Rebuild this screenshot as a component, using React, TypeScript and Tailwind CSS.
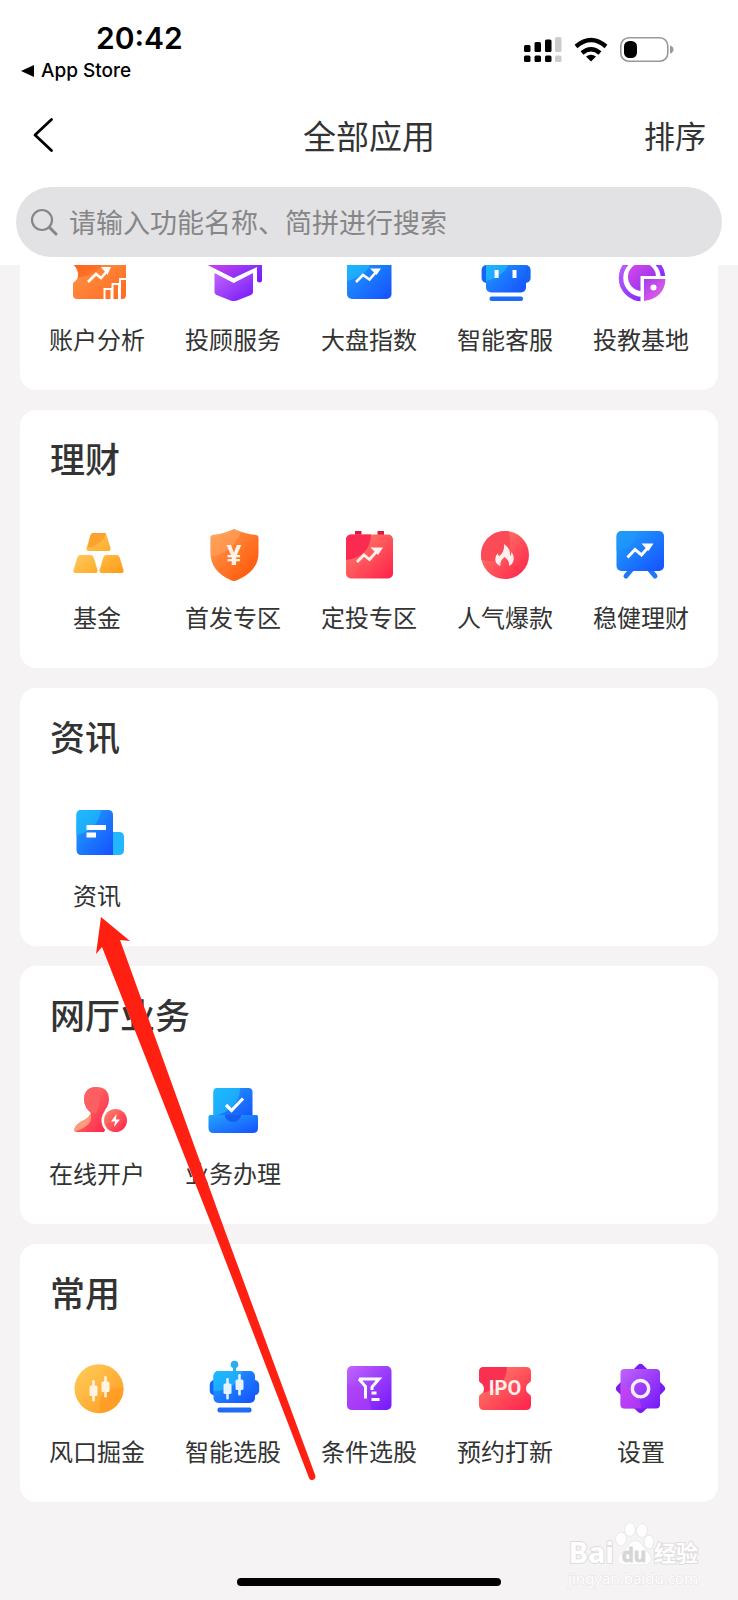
import React from 'react';

interface AppItem {
  label: string;
  icon: React.ReactNode;
}

interface AppSection {
  title: string;
  items: AppItem[];
}

const GRADIENTS: Record<string, [string, string]> = {
  orange: ['#ff9a4f', '#ff6a1f'],
  orangeDeep: ['#ff5a12', '#ff7d35'],
  shield: ['#ffa052', '#ff4f02'],
  gold: ['#ffcd5c', '#ff9a1f'],
  goldSoft: ['#ffc95c', '#fdac2c'],
  goldDeep: ['#ffbe45', '#ff9a1a'],
  purple: ['#c264fb', '#7417fb'],
  purpleDeep: ['#d84be6', '#8b2cf5'],
  pink: ['#a53cf0', '#ee68e4'],
  blue: ['#22a6fc', '#1550ff'],
  cyan: ['#1cbcff', '#1e9dfb'],
  red: ['#ff8a6a', '#ff1f4b'],
  redDeep: ['#ff5a5a', '#f9254a'],
};

// Gradients are declared once and shared by every icon
const Gradients = () => (
  <svg width="0" height="0" className="absolute" aria-hidden="true">
    <defs>
      {Object.entries(GRADIENTS).map(([id, [from, to]]) => (
        <linearGradient key={id} id={id} x1="0" y1="0" x2="1" y2="1">
          <stop offset="0" stopColor={from} />
          <stop offset="1" stopColor={to} />
        </linearGradient>
      ))}
    </defs>
  </svg>
);

const Icon = ({ children }: { children: React.ReactNode }) => (
  <svg viewBox="0 0 64 64" className="size-16" aria-hidden="true">
    {children}
  </svg>
);

const AccountIcon = () => (
  <Icon>
    <path d="M12 10h45a4 4 0 0 1 4 4v36a4 4 0 0 1-4 4H12a4 4 0 0 1-4-4V38q6-4 5-10-1-5-5-9v-5a4 4 0 0 1 4-4z" fill="url(#orange)" />
    <path d="M8 19v-5a4 4 0 0 1 4-4h28q0 18-27 23 2-8-5-14z" fill="url(#orangeDeep)" />
    <path d="M23 37l8-8 5 4 7-8" fill="none" stroke="#fff" strokeWidth="2.6" />
    <path d="M36 22h10l-3.500 8z" fill="#fff" />
    <path d="M39.500 55V44h7v11M47.500 55V39h6.500v16M55 55V34h6" fill="none" stroke="#fff" strokeWidth="2" />
  </Icon>
);

const AdvisorIcon = () => (
  <Icon>
    <path d="M32.700 5L61 19v16.500q0 2-2.500 2t-2.500-2V22L32.700 33 5 19z" fill="url(#purple)" />
    <path d="M5 19L32.700 33 44 18 40 9z" fill="url(#purpleDeep)" />
    <path d="M13.500 28l19.200 10L52 28v19q0 2-2 3l-14 5.500q-3.500 1-6.500 0L15.500 50q-2-1-2-3z" fill="url(#purple)" />
  </Icon>
);

const IndexIcon = () => (
  <Icon>
    <rect x="10" y="10" width="44.500" height="44" rx="5" fill="url(#blue)" />
    <path d="M10 36V15a5 5 0 0 1 5-5h21q-2 20-26 26z" fill="url(#cyan)" />
    <path d="M19 37l7-7 6.500 4.500 7-8" fill="none" stroke="#fff" strokeWidth="2.600" />
    <path d="M33 23.500h11l-4.500 6.500z" fill="#fff" />
  </Icon>
);

const ServiceIcon = () => (
  <Icon>
    <rect x="8.600" y="20" width="49" height="18" rx="5" fill="#1464f5" />
    <rect x="13" y="10" width="40" height="37.500" rx="5" fill="url(#blue)" />
    <path d="M13 36V15a5 5 0 0 1 5-5h20q-2 20-25 26z" fill="url(#cyan)" />
    <path d="M21.600 25h4v8h-4zM39.500 25h4v8h-4z" fill="#fff" />
    <rect x="16.500" y="51.500" width="33.500" height="4.500" rx="2" fill="#1e6cf5" />
  </Icon>
);

const EducationIcon = () => (
  <Icon>
    <circle cx="33" cy="33" r="21" fill="none" stroke="url(#purple)" strokeWidth="4.500" />
    <circle cx="33" cy="32" r="14" fill="url(#purpleDeep)" />
    <path d="M31.500 31H60v29H31.500z" fill="#fff" />
    <path d="M35 34h21.500q-1 19-21.500 22z" fill="url(#pink)" />
    <circle cx="44.500" cy="42.500" r="3" fill="#fff" />
  </Icon>
);

const GoldBar = ({ x, y, fill }: { x: number; y: number; fill: string }) => (
  <path
    d="M7 0h10q2 0 3 2l4 13q.500 3-2 3H2q-2.500 0-2-3L4 2q1-2 3-2z"
    transform={`translate(${x} ${y})`}
    fill={fill}
  />
);

const FundIcon = () => (
  <Icon>
    <GoldBar x={21.5} y={10} fill="url(#goldSoft)" />
    <path d="M28.500 10H41q-2 11-18.500 15l3-13q1-2 3-2z" fill="#fda22d" />
    <GoldBar x={8.5} y={32} fill="url(#goldSoft)" />
    <GoldBar x={34.5} y={32} fill="url(#goldDeep)" />
  </Icon>
);

const ShieldIcon = () => (
  <Icon>
    <path d="M33 6q11 5 22 6 2.500.500 2.500 2v16q0 18-21 27-3.500 2-7 0Q9.500 48 9.500 30V14q0-1.500 2.500-2 11-1 21-6z" fill="url(#shield)" />
    <path d="M33 6l7 3Q32 30 9.500 34V14q0-1.500 2.500-2 11-1 21-6z" fill="#ffb070" opacity=".4" />
    <text x="33" y="42" textAnchor="middle" fontSize="28" fontWeight="700" fill="#fff3ea" fontFamily="Roboto">¥</text>
  </Icon>
);

const PlanIcon = () => (
  <Icon>
    <path d="M18 8h6.500v8H18zM40.500 8H47v8h-6.500z" fill="#dc1745" />
    <rect x="9" y="11.500" width="47" height="44" rx="5" fill="url(#red)" />
    <path d="M9 37V16.500a5 5 0 0 1 5-5h20Q33 34 9 37z" fill="#fb2a50" />
    <path d="M20 39l7-7 5.500 4.500L40 28" fill="none" stroke="#fff0f0" strokeWidth="2.800" />
    <path d="M33.500 24.500H46l-5 7.500z" fill="#fff0f0" />
  </Icon>
);

const HotIcon = () => (
  <Icon>
    <circle cx="32" cy="32" r="24" fill="url(#red)" />
    <path d="M36 8.300q5 24-11 29-8 2-16.500-.5A24 24 0 0 1 36 8.300z" fill="#fb4b57" />
    <path d="M31 21q7 5 6 12 1.500-1 1.500-4 3 4 2 8.500-1 4-4.500 5.500 1-5-4.500-9-5 4-4 9-4-1.500-5-5-1-4 2-7.500 1.500 2 1.500 3 6-5 5-12.500z" fill="#fff0f0" />
  </Icon>
);

const SteadyIcon = () => (
  <Icon>
    <path d="M22 47l-5 6M41 47l5 6" stroke="#1e78f8" strokeWidth="5" strokeLinecap="round" />
    <rect x="7.500" y="8" width="47.500" height="40" rx="5" fill="url(#blue)" />
    <path d="M7.500 28V13a5 5 0 0 1 5-5H29q-2 15-21.500 20z" fill="#1f97f8" opacity=".7" />
    <path d="M18.500 34.500l7.500-8 6.500 5.500L39.500 24" fill="none" stroke="#fff" strokeWidth="3" />
    <path d="M32.500 20.500h12l-5 7.500z" fill="#fff" />
  </Icon>
);

const NewsIcon = () => (
  <Icon>
    <path d="M47 31h7q5 0 5 5v13q0 5-5 5h-7z" fill="#21b6fd" />
    <path d="M16.500 9H43q5 0 5 5v40H16.500q-5 0-5-5V14q0-5 5-5z" fill="url(#blue)" />
    <path d="M16.500 9H36q-3 20-24.500 25V14q0-5 5-5z" fill="url(#cyan)" />
    <path d="M21.500 24H41v5H21.500zM21.500 31.500H31v5h-9.500z" fill="#fff" />
  </Icon>
);

const OpenAccountIcon = () => (
  <Icon>
    <path d="M31.500 8q12 0 12.500 12 0 6-4 11-2 4 .500 7 4 8-1.500 15H12q-3 0-2.500-3 1-4 6-7 9-4 10.500-9-7-6-7-14 1-12 12.500-12z" fill="url(#red)" />
    <path d="M31.500 8q-12 0-12.500 12 0 8 7 14h5q7-13 1-26z" fill="#fb5f61" />
    <path d="M9.500 50q1-4 6-7 8-3.500 10-8.500 4 12-16 18z" fill="#ff9b7a" />
    <circle cx="50.500" cy="41.500" r="14" fill="#fff" />
    <circle cx="50.500" cy="41.500" r="11.500" fill="url(#red)" />
    <path d="M51.500 35l-5.500 7.500h4L49 48l6-7.500h-4z" fill="#fff" />
  </Icon>
);

const BusinessIcon = () => (
  <Icon>
    <path d="M17 9h30.500q4 0 4 4v27h-39V13q0-4 4.500-4z" fill="url(#blue)" />
    <path d="M17 9h22q0 22-26.500 28V13q0-4 4.500-4z" fill="url(#cyan)" />
    <path d="M9 36H24a8 6 0 0 0 16 0h15.500q1.500 0 1.500 1.500V49q0 5-5 5H12.500q-5 0-5-5V37.500q0-1.500 1.500-1.500z" fill="url(#blue)" />
    <path d="M24 36h16a8 7 0 0 1-16 0z" fill="#155ff0" />
    <path d="M25 26l5.500 5.500L42 19.500" fill="none" stroke="#fff" strokeWidth="3.200" />
  </Icon>
);

const Candle = ({ x, y, fill }: { x: number; y: number; fill: string }) => (
  <g transform={`translate(${x} ${y})`} fill={fill}>
    <rect x="-1.300" width="2.600" height="21.500" rx="1.200" />
    <rect x="-4" y="5.500" width="8" height="10.500" rx="1.500" />
  </g>
);

const TrendIcon = () => (
  <Icon>
    <circle cx="34" cy="31.700" r="24.500" fill="url(#gold)" />
    <path d="M58.500 31A24.500 24.500 0 0 1 35 56q-4-20 14-25 5-1 9.500 0z" fill="#ff9a22" opacity=".7" />
    <Candle x={28.5} y={23} fill="#fff4e2" />
    <Candle x={40.5} y={19} fill="#fff4e2" />
  </Icon>
);

const RobotIcon = () => (
  <Icon>
    <circle cx="33.500" cy="7.500" r="3.800" fill="#29aef0" />
    <path d="M32 10h3v6h-3z" fill="#29aef0" />
    <rect x="8.700" y="23" width="49.500" height="15.500" rx="5" fill="#1464f5" />
    <rect x="12.500" y="14" width="41.500" height="32" rx="5" fill="url(#blue)" />
    <path d="M12.500 34V19a5 5 0 0 1 5-5H41q-5 20-28.500 20z" fill="url(#cyan)" />
    <rect x="16.500" y="50.500" width="34" height="5" rx="2" fill="#1e6cf5" />
    <Candle x={26.5} y={21} fill="#e6f2ff" />
    <Candle x={38.5} y={17} fill="#e6f2ff" />
  </Icon>
);

const FilterIcon = () => (
  <Icon>
    <rect x="10" y="9" width="44.500" height="44" rx="5" fill="url(#purple)" />
    <path d="M10 27q22 4 24 26H15q-5 0-5-5z" fill="#b13df5" opacity=".6" />
    <path d="M22 22h20L35 30v3M22 22l6.500 7.500V41.500" fill="none" stroke="#fff" strokeWidth="3" />
    <path d="M34.500 34.500h5v3h-5zM34.500 41h8v3h-8z" fill="#fff" />
  </Icon>
);

const IpoIcon = () => (
  <Icon>
    <path d="M11 10h42q5 0 5 5v8q0 2-2 3-3 2-3 5.500t3 5.500q2 1 2 3v8q0 5-5 5H11q-5 0-5-5v-8q0-2 2-3 3-2 3-5.500T8 26q-2-1-2-3v-8q0-5 5-5z" fill="url(#red)" />
    <path d="M11 10h23q-1 22-23.500 25.500Q11 34 11 31.500 11 28 8 26q-2-1-2-3v-8q0-5 5-5z" fill="#f9304f" />
    <text x="32" y="38" textAnchor="middle" fontSize="20" fontWeight="700" fill="#fff0f0" fontFamily="Roboto">IPO</text>
  </Icon>
);

const SettingsIcon = () => (
  <Icon>
    <rect x="13" y="13" width="37" height="37" rx="4" fill="#7a1df0" transform="rotate(45 31.500 31.500)" />
    <rect x="11.500" y="12" width="39.500" height="39.500" rx="4" fill="url(#purple)" />
    <path d="M11.500 28q17 1 21 23.500h-17q-4 0-4-4z" fill="#d23ff0" opacity=".5" />
    <circle cx="31.500" cy="31.700" r="8.200" fill="none" stroke="#fff0fa" strokeWidth="3.400" />
  </Icon>
);

const TOP_ITEMS: AppItem[] = [
  { label: '账户分析', icon: <AccountIcon /> },
  { label: '投顾服务', icon: <AdvisorIcon /> },
  { label: '大盘指数', icon: <IndexIcon /> },
  { label: '智能客服', icon: <ServiceIcon /> },
  { label: '投教基地', icon: <EducationIcon /> },
];

const SECTIONS: AppSection[] = [
  {
    title: '理财',
    items: [
      { label: '基金', icon: <FundIcon /> },
      { label: '首发专区', icon: <ShieldIcon /> },
      { label: '定投专区', icon: <PlanIcon /> },
      { label: '人气爆款', icon: <HotIcon /> },
      { label: '稳健理财', icon: <SteadyIcon /> },
    ],
  },
  { title: '资讯', items: [{ label: '资讯', icon: <NewsIcon /> }] },
  {
    title: '网厅业务',
    items: [
      { label: '在线开户', icon: <OpenAccountIcon /> },
      { label: '业务办理', icon: <BusinessIcon /> },
    ],
  },
  {
    title: '常用',
    items: [
      { label: '风口掘金', icon: <TrendIcon /> },
      { label: '智能选股', icon: <RobotIcon /> },
      { label: '条件选股', icon: <FilterIcon /> },
      { label: '预约打新', icon: <IpoIcon /> },
      { label: '设置', icon: <SettingsIcon /> },
    ],
  },
];

const AppGrid = ({ items }: { items: AppItem[] }) => (
  <div className="grid grid-cols-5 px-[9px] pb-[35px]">
    {items.map(({ label, icon }) => (
      <button key={label} type="button" className="flex flex-col items-center gap-[14px]">
        {icon}
        <span className="whitespace-nowrap text-2xl leading-8">{label}</span>
      </button>
    ))}
  </div>
);

const StatusBar = () => (
  <div className="flex justify-between pl-5 pr-16 pt-5 font-[Inter,sans-serif] text-black">
    <div>
      <div className="pl-[76px] text-[30px] font-semibold leading-9">20:42</div>
      <a href="#app-store" className="flex items-center gap-[7px] text-[19px] font-medium leading-[30px]">
        <svg viewBox="0 0 14 12" className="h-3 w-[14px]" aria-hidden="true">
          <path d="M1 6L14 0v12z" />
        </svg>
        App Store
      </a>
    </div>
    <div className="flex items-center gap-3 self-start pt-[17px]">
      <svg viewBox="0 0 38 25" className="h-[25px] w-[38px]" aria-hidden="true">
        <rect y="8" width="6.500" height="7" rx="1.500" />
        <rect x="10.500" y="5" width="6.500" height="10" rx="1.500" />
        <rect x="21" y="2.500" width="6.500" height="12.500" rx="1.500" />
        <rect x="31" width="6.500" height="15" rx="1.500" fill="#ccc" />
        <rect y="18.500" width="6.500" height="6.500" rx="1.500" />
        <rect x="10.500" y="18.500" width="6.500" height="6.500" rx="1.500" />
        <rect x="21" y="18.500" width="6.500" height="6.500" rx="1.500" />
        <rect x="31" y="18.500" width="6.500" height="6.500" rx="1.500" fill="#ccc" />
      </svg>
      <svg viewBox="0 0 34 25" className="h-[25px] w-[34px]" aria-hidden="true">
        <path d="M2 9.500Q17-3.500 32 9.500M8 16Q17 8.500 26 16" fill="none" stroke="#000" strokeWidth="4.400" />
        <path d="M12 19.500q5-3.500 10 0l-5 5z" />
      </svg>
      <svg viewBox="0 0 54 25" className="h-[25px] w-[54px]" aria-hidden="true">
        <rect x=".800" y=".800" width="47" height="23.400" rx="8" fill="none" stroke="#999" strokeWidth="1.600" />
        <rect x="4" y="4" width="13" height="17" rx="5.500" />
        <path d="M50 8.500q3.500 1 3.500 4t-3.500 4z" fill="#999" />
      </svg>
    </div>
  </div>
);

const Header = () => (
  <header className="relative z-10 bg-white">
    <StatusBar />
    <div className="grid h-[101px] grid-cols-3 items-center px-8 pb-1">
      <button type="button" aria-label="返回" className="justify-self-start">
        <svg viewBox="0 0 22 36" className="h-9 w-[22px]" fill="none" stroke="#000" strokeWidth="2.800" strokeLinecap="round" strokeLinejoin="round" aria-hidden="true">
          <path d="M19.500 2.500L3 18l16.500 15.500" />
        </svg>
      </button>
      <h1 className="justify-self-center text-[33px] leading-10">全部应用</h1>
      <button type="button" className="justify-self-end text-[31px] leading-10">排序</button>
    </div>
    <div className="px-4 pb-2">
      <label className="flex h-[70px] items-center gap-[11px] rounded-full bg-[#e2e2e4] pl-[14px] pr-8">
        <svg viewBox="0 0 28 28" className="size-7 shrink-0" fill="none" stroke="#868688" strokeWidth="2.200" strokeLinecap="round" aria-hidden="true">
          <circle cx="12" cy="12" r="10" />
          <path d="M19.500 19.500L26 26" strokeWidth="3" />
        </svg>
        <input
          type="search"
          aria-label="搜索"
          placeholder="请输入功能名称、简拼进行搜索"
          className="min-w-0 flex-1 bg-transparent text-[27px] leading-10 outline-none placeholder:text-[#868688]"
        />
      </label>
    </div>
  </header>
);

// Red pointer drawn over the cards, aimed at the 资讯 entry
const Pointer = () => (
  <svg viewBox="0 0 222 564" className="pointer-events-none absolute left-[95px] top-[652px] h-[564px] w-[222px]" aria-hidden="true">
    <path d="M6 0L35 24 25 23 130 314 220.500 559q0 3.500-3 4t-3.500-2L119 314 7 30 1 37z" fill="#ff2012" />
  </svg>
);

const Watermark = () => (
  <div className="pointer-events-none absolute bottom-3 right-10 font-['Noto_Sans','Noto_Sans_CJK_SC',sans-serif] text-white [paint-order:stroke] [-webkit-text-stroke:2px_#dedddd]">
    <div className="flex items-end justify-end text-[29px] font-bold leading-8">
      <span>Bai</span>
      <svg viewBox="0 0 40 46" className="h-[46px] w-10" fill="#fff" stroke="#dedddd" aria-hidden="true">
        <ellipse cx="7" cy="17" rx="5" ry="6.500" />
        <ellipse cx="16" cy="7.500" rx="5" ry="6.500" />
        <ellipse cx="28" cy="8.500" rx="5" ry="6.500" />
        <ellipse cx="35" cy="20" rx="4.500" ry="6.500" />
        <path d="M21 19q5 0 9 7l5 6q4 5 0 9-3 2-8 1.500H14q-7 1-9.500-3-1.500-4 2-7l6-6q4-7.500 8.500-7.500z" />
        <text x="20" y="40" textAnchor="middle" fontSize="19" fontWeight="700" fill="#d6d5d5" className="[-webkit-text-stroke:0px]">du</text>
      </svg>
      <span className="text-[22px]">经验</span>
    </div>
    <div className="text-[15px] leading-5 [-webkit-text-stroke:1px_#e4e3e3]">jingyan.baidu.com</div>
  </div>
);

const App: React.FC = () => {
  return (
    <div className="relative flex min-h-screen flex-col overflow-hidden bg-[#f5f3f4] font-['Noto_Sans_CJK_SC',sans-serif] text-[#333]">
      <Gradients />
      <Header />

      <main className="relative flex flex-col gap-5 px-5">
        {/* Scrolled partly under the header */}
        <section className="-mt-5 rounded-b-2xl bg-white">
          <AppGrid items={TOP_ITEMS} />
        </section>

        {SECTIONS.map(({ title, items }) => (
          <section key={title} className="rounded-2xl bg-white pt-[30px]">
            <h2 className="mb-[47px] pl-[30px] text-[35px] font-medium leading-9">{title}</h2>
            <AppGrid items={items} />
          </section>
        ))}

        <Pointer />
      </main>

      <Watermark />
      <div className="mx-auto mb-[14px] mt-auto h-2 w-[264px] rounded-full bg-black" />
    </div>
  );
};

export default App;
